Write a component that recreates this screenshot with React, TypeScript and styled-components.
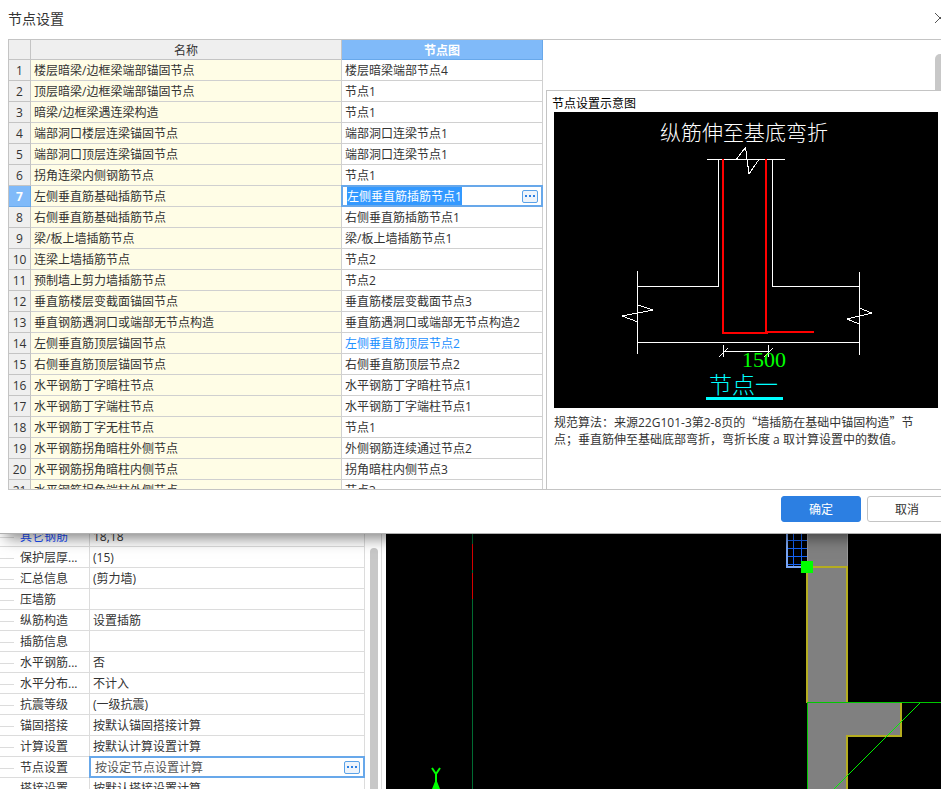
import React from "react";
import styled, { createGlobalStyle, css } from "styled-components";

const Global = createGlobalStyle`
  * { box-sizing: border-box; }
  html, body, #root { height: 100%; margin: 0; }
  body, button, input {
    font-family: "Open Sans", "Noto Sans CJK SC", sans-serif;
    font-size: 12px;
    color: #333;
  }
  body { overflow: hidden; background: #fff; }
`;

const Shell = styled.div`
  display: flex;
  flex-direction: column;
  height: 100vh;
  overflow: hidden;
`;

const Dialog = styled.section`
  position: relative;
  z-index: 1;
  flex: none;
  margin-right: -18px;
  background: #fff;
  border-bottom: 1px solid #b0b0b0;
  box-shadow: 6px 4px 14px rgba(0, 0, 0, 0.5);
`;

const TitleBar = styled.header`
  display: flex;
  align-items: center;
  justify-content: space-between;
  height: 39px;
  padding: 0 13px 3px 8px;
`;

const Title = styled.h1`
  margin: 0;
  font-size: 14px;
  font-weight: 400;
`;

const CloseButton = styled.button`
  display: flex;
  padding: 0;
  border: 0;
  background: none;
`;

const DialogBody = styled.div`
  display: flex;
  height: 451px;
  margin-left: 8px;
  border-top: 1px solid #c4c4c4;
  border-bottom: 1px solid #c4c4c4;
`;

const TableClip = styled.div`
  flex: none;
  width: 535px;
  overflow: hidden;
`;

const NodeTable = styled.table`
  width: 100%;
  table-layout: fixed;
  border-collapse: separate;
  border-spacing: 0;
  border-left: 1px solid #c4c4c4;
`;

const HeadCell = styled.th<{ $active?: boolean }>`
  height: 20px;
  padding: 2px 0 0;
  line-height: 17px;
  font-weight: 400;
  background: #efefef;
  border-right: 1px solid #c4c4c4;
  border-bottom: 1px solid #c4c4c4;
  ${(p) =>
    p.$active &&
    css`
      color: #fff;
      font-weight: 700;
      background: #80baf9;
      border-right-color: #68a8ea;
      border-bottom-color: #68a8ea;
    `}
`;

const NumberCell = styled.th<{ $active?: boolean }>`
  height: 21px;
  padding: 2px 0 0;
  line-height: 18px;
  font-weight: 400;
  background: #efefef;
  border-right: 1px solid #c4c4c4;
  border-bottom: 1px solid #c4c4c4;
  ${(p) =>
    p.$active &&
    css`
      color: #fff;
      font-weight: 700;
      background: #80baf9;
      border-color: #68a8ea;
    `}
`;

const DataCell = styled.td<{ $tint?: boolean; $link?: boolean }>`
  height: 21px;
  padding: 2px 3px 0;
  line-height: 18px;
  white-space: nowrap;
  overflow: hidden;
  color: ${(p) => (p.$link ? "#1e90ff" : "inherit")};
  background: ${(p) => (p.$tint ? "#fffde6" : "#fff")};
  border-right: 1px solid #d0d0d0;
  border-bottom: 1px solid #d0d0d0;
`;

const EditCell = styled.td`
  height: 21px;
  padding: 0;
`;

const Editor = styled.div`
  display: flex;
  align-items: center;
  height: 22px;
  margin: -1px 0 0 -1px;
  padding: 0 3px 0 4px;
  background: #fff;
  border: 2px solid #68a8ea;
`;

const EditorInput = styled.input<{ $selected?: boolean }>`
  flex: ${(p) => (p.$selected ? "none" : "1")};
  width: ${(p) => (p.$selected ? "115px" : "auto")};
  min-width: 0;
  height: 18px;
  margin-right: auto;
  padding: 0;
  border: 0;
  outline: 0;
  color: ${(p) => (p.$selected ? "#fff" : "#555")};
  background: ${(p) => (p.$selected ? "#3399ff" : "transparent")};
`;

const MoreButton = styled.button`
  display: flex;
  align-items: center;
  justify-content: center;
  width: 16px;
  height: 13px;
  padding: 0;
  border: 1px solid #5aa2e8;
  border-radius: 2px;
  background: #eef4fb;
`;

const Side = styled.div`
  display: flex;
  flex: 1;
  flex-direction: column;
  min-width: 0;
  padding-left: 3px;
`;

const ScrollTrack = styled.div`
  display: flex;
  flex: none;
  justify-content: flex-end;
  height: 50px;
  padding: 14px 12px 0 0;
`;

const ScrollThumb = styled.div`
  width: 12px;
  border-radius: 5px 5px 0 0;
  background: #c8c8c8;
`;

const Preview = styled.section`
  flex: 1;
  padding: 4px 21px 0 7px;
  border-top: 1px solid #c4c4c4;
  border-left: 1px solid #c4c4c4;
`;

const PreviewTitle = styled.h2`
  margin: 0 0 0 -2px;
  font-size: 12px;
  font-weight: 400;
  line-height: 17px;
  color: #000;
`;

const Diagram = styled.svg`
  display: block;
  width: 100%;
  height: 296px;
  background: #000;
`;

const Note = styled.p`
  max-width: 372px;
  margin: 6px 0 0;
  line-height: 17px;
`;

const WideQuote = styled.span`
  font-family: "Noto Sans CJK SC", sans-serif;
  line-height: 1;
`;

const Footer = styled.footer`
  display: flex;
  justify-content: flex-end;
  gap: 6px;
  height: 43px;
  padding: 6px 12px 0 0;
`;

const ActionButton = styled.button<{ $primary?: boolean }>`
  width: 80px;
  height: 26px;
  padding: 0;
  border: 1px solid ${(p) => (p.$primary ? "#2c7fe2" : "#c4c4c4")};
  border-radius: 3px;
  color: ${(p) => (p.$primary ? "#fff" : "#333")};
  background: ${(p) => (p.$primary ? "#2c7fe2" : "#fff")};
`;

const Workspace = styled.main`
  display: flex;
  flex: 1;
  min-height: 0;
  overflow: hidden;
`;

const PropertyPane = styled.div`
  flex: none;
  width: 365px;
  height: 100%;
  overflow: hidden;
`;

const PropertyTable = styled.table`
  width: 100%;
  margin-top: -8px;
  table-layout: fixed;
  border-collapse: separate;
  border-spacing: 0;
`;

const PropertyName = styled.th<{ $link?: boolean }>`
  height: 21px;
  padding: 2px 0 0;
  line-height: 18px;
  font-weight: 400;
  text-align: left;
  white-space: nowrap;
  color: ${(p) => (p.$link ? "#1a50ff" : "inherit")};
  border-right: 1px solid #dcdcdc;
  border-bottom: 1px solid #dcdcdc;
`;

const Branch = styled.span`
  display: inline-block;
  width: 14px;
  height: 1px;
  margin-right: 6px;
  vertical-align: middle;
  background: #dcdcdc;
`;

const PropertyValue = styled.td`
  height: 21px;
  padding: 2px 3px 0;
  line-height: 18px;
  border-right: 1px solid #dcdcdc;
  border-bottom: 1px solid #dcdcdc;
`;

const PaneScroll = styled.div`
  flex: none;
  width: 21px;
  padding: 14px 8px 0 5px;
  background: linear-gradient(#dcdcdc, #dcdcdc) 16px 0 / 1px 100% no-repeat;
`;

const PaneThumb = styled.div`
  width: 8px;
  height: 100%;
  border-radius: 4px 4px 0 0;
  background: #c8c8c8;
`;

const Viewport = styled.div`
  flex: 1;
  min-width: 0;
  background: #000;
`;

const Drawing = styled.svg`
  display: block;
  width: 100%;
  height: 100%;
`;

const nodes: [string, string][] = [
  ["楼层暗梁/边框梁端部锚固节点", "楼层暗梁端部节点4"],
  ["顶层暗梁/边框梁端部锚固节点", "节点1"],
  ["暗梁/边框梁遇连梁构造", "节点1"],
  ["端部洞口楼层连梁锚固节点", "端部洞口连梁节点1"],
  ["端部洞口顶层连梁锚固节点", "端部洞口连梁节点1"],
  ["拐角连梁内侧钢筋节点", "节点1"],
  ["左侧垂直筋基础插筋节点", "左侧垂直筋插筋节点1"],
  ["右侧垂直筋基础插筋节点", "右侧垂直筋插筋节点1"],
  ["梁/板上墙插筋节点", "梁/板上墙插筋节点1"],
  ["连梁上墙插筋节点", "节点2"],
  ["预制墙上剪力墙插筋节点", "节点2"],
  ["垂直筋楼层变截面锚固节点", "垂直筋楼层变截面节点3"],
  ["垂直钢筋遇洞口或端部无节点构造", "垂直筋遇洞口或端部无节点构造2"],
  ["左侧垂直筋顶层锚固节点", "左侧垂直筋顶层节点2"],
  ["右侧垂直筋顶层锚固节点", "右侧垂直筋顶层节点2"],
  ["水平钢筋丁字暗柱节点", "水平钢筋丁字暗柱节点1"],
  ["水平钢筋丁字端柱节点", "水平钢筋丁字端柱节点1"],
  ["水平钢筋丁字无柱节点", "节点1"],
  ["水平钢筋拐角暗柱外侧节点", "外侧钢筋连续通过节点2"],
  ["水平钢筋拐角暗柱内侧节点", "拐角暗柱内侧节点3"],
  ["水平钢筋拐角端柱外侧节点", "节点3"],
];

const SELECTED = 6;
const CHANGED = 13;

const properties: [string, string][] = [
  ["其它钢筋", "18,18"],
  ["保护层厚...", "(15)"],
  ["汇总信息", "(剪力墙)"],
  ["压墙筋", ""],
  ["纵筋构造", "设置插筋"],
  ["插筋信息", ""],
  ["水平钢筋...", "否"],
  ["水平分布...", "不计入"],
  ["抗震等级", "(一级抗震)"],
  ["锚固搭接", "按默认锚固搭接计算"],
  ["计算设置", "按默认计算设置计算"],
  ["节点设置", "按设定节点设置计算"],
  ["搭接设置", "按默认搭接设置计算"],
];

function More({ label }: { label: string }) {
  return (
    <MoreButton type="button" aria-label={label}>
      <svg width="12" height="3" viewBox="0 0 12 3" fill="#2c7fe2" shapeRendering="crispEdges">
        <path d="M1 0h2v2h-2zM5 0h2v2h-2zM9 0h2v2h-2z" />
      </svg>
    </MoreButton>
  );
}

function NodeDiagram() {
  return (
    <Diagram viewBox="0 0 384 296" preserveAspectRatio="xMidYMid slice" role="img" aria-label="节点设置示意图">
      <g fontFamily='"Noto Sans CJK SC", sans-serif' fontWeight="300">
        <text x="106" y="28" fontSize="21" fill="#fff">纵筋伸至基底弯折</text>
        <text x="155" y="281" fontSize="23" fill="#00ffff">节点一</text>
      </g>
      <g fill="none" stroke="#fff" shapeRendering="crispEdges">
        <path d="M153 47.5H231M164.5 47V174.500H83M218.500 47V174.500H305M83.500 159V242M83 230.500H305M305.500 160V243" />
        <path d="M182.500 47L191.500 35.500L195 62L204.500 48" />
        <path d="M84 193L99 198L68 204L84 210M305 196L318 201L293 207L305 212" />
        <path d="M169.500 233V245M214.500 233V245M169 239.500H215M165 245L174 236M210 245L219 236" />
      </g>
      <text x="188" y="255" fontSize="22" fontFamily='"Liberation Serif", serif' fill="#00ff00">1500</text>
      <g fill="none" stroke="#f00" strokeWidth="2" shapeRendering="crispEdges">
        <path d="M169 47V221H214M212 47V220H260" />
      </g>
      <path d="M152 286.500H229" stroke="#00ffff" strokeWidth="3" shapeRendering="crispEdges" />
    </Diagram>
  );
}

function ModelDrawing() {
  return (
    <Drawing viewBox="0 0 555 255" preserveAspectRatio="xMinYMin slice" role="img" aria-label="模型视图">
      <g fill="none" shapeRendering="crispEdges">
        <path d="M86.500 0V255" stroke="#006b32" />
        <path d="M86.500 10V36M86.500 39V65" stroke="#d40000" />
        <path d="M421 0H461V169H515V203H461V255H421Z" fill="#808080" />
        <path d="M421.500 0V33M461.500 0V33" stroke="#999" />
        <path d="M407.500 0V32M415.500 0V32M401 6.500H421M401 14.500H421M401 22.500H421M401 30.500H421" stroke="#1464f5" />
        <path d="M401 0V33H421" stroke="#78a5f5" strokeWidth="2" />
        <path d="M421 33V169M421 33H461V169M515 169V202H461V255" stroke="#b5ad20" strokeWidth="2" />
        <path d="M421.500 255V168.500H555" stroke="#00c800" />
      </g>
      <path d="M534 169L448 255" stroke="#00f000" strokeWidth="1" />
      <path d="M415 27H427V39H415Z" fill="#00ff00" />
      <path d="M46 234L50 240L54 234M50 240V248" fill="none" stroke="#00ff00" strokeWidth="2" />
      <path d="M50 245L54 255H46Z" fill="#00ff00" />
    </Drawing>
  );
}

export default function App() {
  return (
    <>
      <Global />
      <Shell>
        <Dialog role="dialog" aria-labelledby="dialog-title">
          <TitleBar>
            <Title id="dialog-title">节点设置</Title>
            <CloseButton type="button" aria-label="关闭">
              <svg width="12" height="12" viewBox="0 0 12 12" fill="none" stroke="#555">
                <path d="M1 1L11 11M11 1L1 11" />
              </svg>
            </CloseButton>
          </TitleBar>
          <DialogBody>
            <TableClip>
              <NodeTable>
                <colgroup>
                  <col width="22" />
                  <col width="311" />
                  <col />
                </colgroup>
                <thead>
                  <tr>
                    <HeadCell />
                    <HeadCell scope="col">名称</HeadCell>
                    <HeadCell scope="col" $active>节点图</HeadCell>
                  </tr>
                </thead>
                <tbody>
                  {nodes.map(([name, node], i) => (
                    <tr key={name}>
                      <NumberCell scope="row" $active={i === SELECTED}>{i + 1}</NumberCell>
                      <DataCell $tint>{name}</DataCell>
                      {i === SELECTED ? (
                        <EditCell>
                          <Editor>
                            <EditorInput $selected aria-label={name} defaultValue={node} />
                            <More label="选择节点图" />
                          </Editor>
                        </EditCell>
                      ) : (
                        <DataCell $link={i === CHANGED}>{node}</DataCell>
                      )}
                    </tr>
                  ))}
                </tbody>
              </NodeTable>
            </TableClip>
            <Side>
              <ScrollTrack>
                <ScrollThumb />
              </ScrollTrack>
              <Preview>
                <PreviewTitle>节点设置示意图</PreviewTitle>
                <NodeDiagram />
                <Note>
                  规范算法：来源22G101-3第2-8页的<WideQuote>“</WideQuote>墙插筋在基础中锚固构造<WideQuote>”</WideQuote>节点；垂直筋伸至基础底部弯折，弯折长度 a 取计算设置中的数值。
                </Note>
              </Preview>
            </Side>
          </DialogBody>
          <Footer>
            <ActionButton type="button" $primary>确定</ActionButton>
            <ActionButton type="button">取消</ActionButton>
          </Footer>
        </Dialog>
        <Workspace>
          <PropertyPane>
            <PropertyTable>
              <colgroup>
                <col width="90" />
                <col />
              </colgroup>
              <tbody>
                {properties.map(([name, value]) => (
                  <tr key={name}>
                    <PropertyName scope="row" $link={name === "其它钢筋"}>
                      <Branch />
                      {name}
                    </PropertyName>
                    {name === "节点设置" ? (
                      <EditCell>
                        <Editor>
                          <EditorInput aria-label={name} defaultValue={value} />
                          <More label="编辑节点设置" />
                        </Editor>
                      </EditCell>
                    ) : (
                      <PropertyValue>{value}</PropertyValue>
                    )}
                  </tr>
                ))}
              </tbody>
            </PropertyTable>
          </PropertyPane>
          <PaneScroll>
            <PaneThumb />
          </PaneScroll>
          <Viewport>
            <ModelDrawing />
          </Viewport>
        </Workspace>
      </Shell>
    </>
  );
}
